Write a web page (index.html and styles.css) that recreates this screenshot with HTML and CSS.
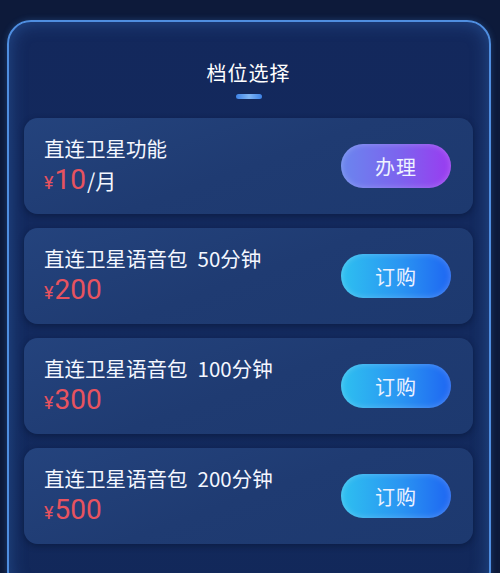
FILE: index.html
```html
<!DOCTYPE html>
<html lang="zh-CN">
<head>
<meta charset="utf-8">
<link rel="stylesheet" href="styles.css">
</head>
<body>
<div class="panel">
  <h1 class="title">档位选择</h1>
  <div class="title-bar"></div>
  <div class="list">
    <div class="card">
      <div class="info">
        <div class="name">直连卫星功能</div>
        <div class="price"><span class="yen">¥</span><span class="num">10</span><span class="unit">/月</span></div>
      </div>
      <div class="btn btn-purple">办理</div>
    </div>
    <div class="card">
      <div class="info">
        <div class="name">直连卫星语音包<span class="mins">50分钟</span></div>
        <div class="price"><span class="yen">¥</span><span class="num">200</span></div>
      </div>
      <div class="btn btn-blue">订购</div>
    </div>
    <div class="card">
      <div class="info">
        <div class="name">直连卫星语音包<span class="mins">100分钟</span></div>
        <div class="price"><span class="yen">¥</span><span class="num">300</span></div>
      </div>
      <div class="btn btn-blue">订购</div>
    </div>
    <div class="card">
      <div class="info">
        <div class="name">直连卫星语音包<span class="mins">200分钟</span></div>
        <div class="price"><span class="yen">¥</span><span class="num">500</span></div>
      </div>
      <div class="btn btn-blue">订购</div>
    </div>
  </div>
</div>
</body>
</html>
```

FILE: styles.css
```css
html, body {
  margin: 0;
  padding: 0;
  height: 100%;
}
body {
  background: #0d1a3a;
  font-family: "Noto Sans CJK SC", "Noto Sans", sans-serif;
  color: #fff;
  overflow: hidden;
  padding: 20px 9px 0 7px;
  box-sizing: border-box;
}
.panel {
  box-sizing: border-box;
  width: 484px;
  height: 575px;
  border: 2px solid #4f8ee0;
  border-radius: 24px;
  background: linear-gradient(180deg, #13285c 0%, #132a5e 60%, #12285a 100%);
  box-shadow: inset 0 0 18px rgba(70, 140, 230, 0.35), 0 0 6px rgba(70, 140, 230, 0.3);
  padding: 0 16px 0 15px;
}
.title {
  margin: 0;
  padding-top: 36px;
  font-size: 20px;
  font-weight: 400;
  line-height: 30px;
  text-align: center;
  letter-spacing: 1px;
}
.title-bar {
  width: 26px;
  height: 5px;
  border-radius: 3px;
  margin: 6px auto 0;
  background: linear-gradient(90deg, #3d82e6, #7fb6f5, #3d82e6);
}
.list {
  margin-top: 19px;
  display: flex;
  flex-direction: column;
  gap: 14px;
}
.card {
  height: 96px;
  box-sizing: border-box;
  border-radius: 14px;
  background: linear-gradient(160deg, #24437d 0%, #1f3b72 50%, #1d396f 100%);
  box-shadow: 0 2px 6px rgba(5, 15, 40, 0.45);
  display: flex;
  align-items: center;
  justify-content: space-between;
  padding: 0 22px 0 20px;
}
.info {
  display: flex;
  flex-direction: column;
}
.name {
  font-size: 20.5px;
  line-height: 30px;
  color: #f4f7ff;
}
.mins {
  margin-left: 10px;
}
.price {
  display: flex;
  align-items: baseline;
  line-height: 34px;
  color: #e8535f;
}
.yen {
  font-family: Roboto, "Noto Sans", sans-serif;
  font-size: 18px;
  margin-right: 1px;
}
.num {
  font-family: Roboto, "Noto Sans", sans-serif;
  font-size: 28px;
}
.unit {
  font-size: 21px;
  color: #f4f7ff;
  margin-left: 1px;
}
.btn {
  width: 110px;
  height: 44px;
  border-radius: 22px;
  display: flex;
  align-items: center;
  justify-content: center;
  font-size: 20px;
  color: #eef3ff;
  letter-spacing: 1px;
}
.btn-purple {
  background: linear-gradient(90deg, #6a86ee 0%, #7d62ee 55%, #9a3bf0 100%);
  box-shadow: inset 0 0 6px rgba(255, 255, 255, 0.25);
}
.btn-blue {
  background: linear-gradient(90deg, #2ec0f0 0%, #2a94f2 55%, #1e66f2 100%);
  box-shadow: inset 0 0 6px rgba(255, 255, 255, 0.25);
}
```
